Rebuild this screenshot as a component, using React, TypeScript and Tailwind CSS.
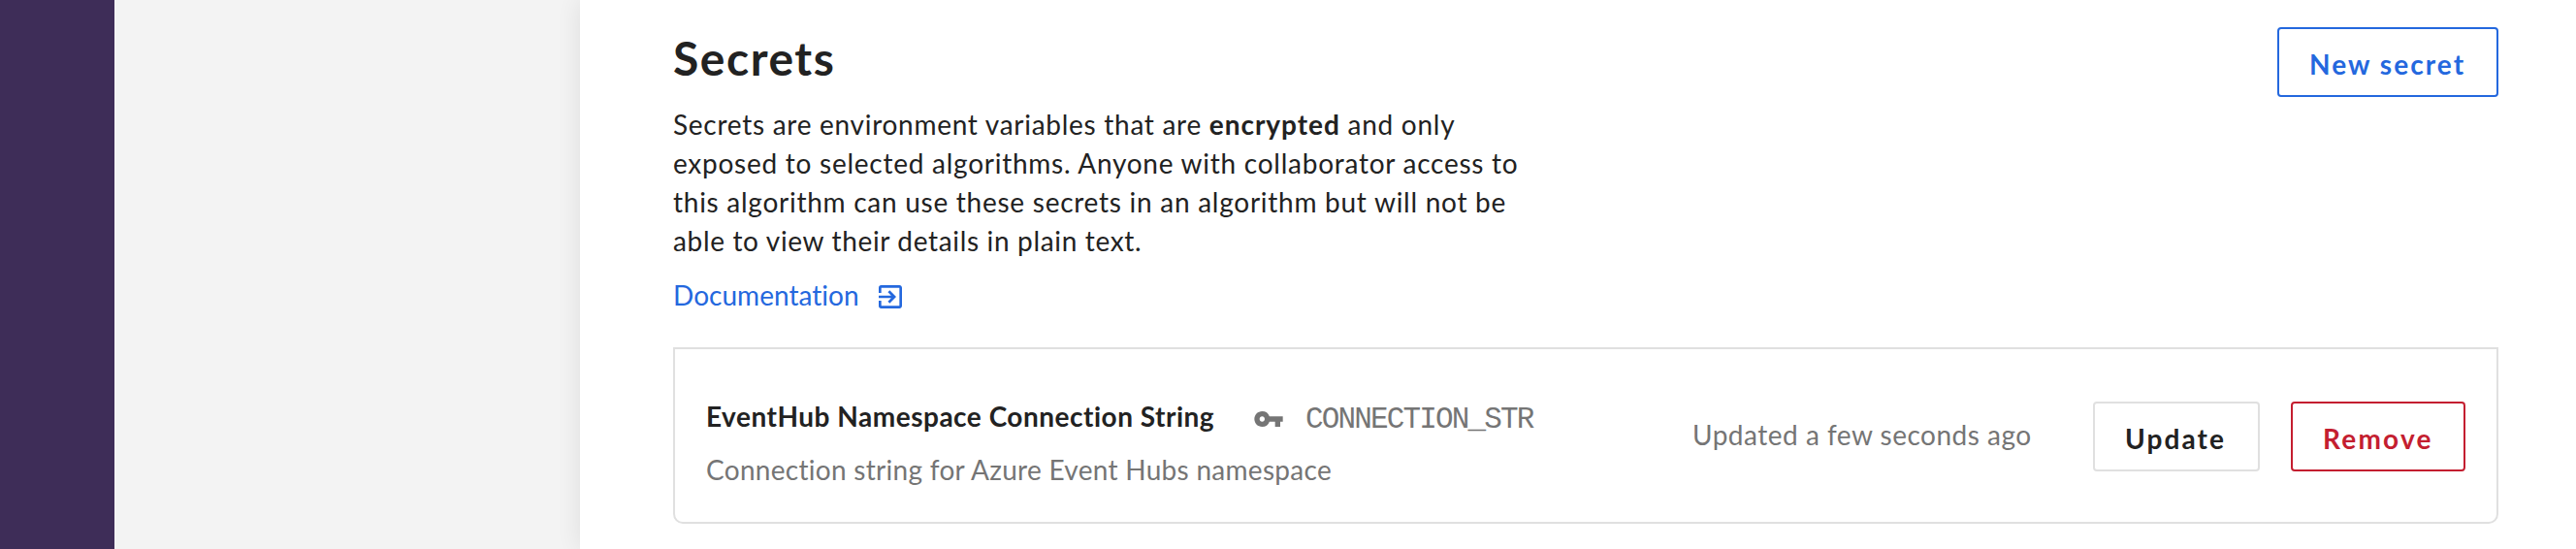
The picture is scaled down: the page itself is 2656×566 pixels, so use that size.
import type { ReactNode } from "react";
import { MdExitToApp, MdVpnKey } from "react-icons/md";

type ButtonProps = { children: ReactNode; className: string };

function OutlineButton({ children, className }: ButtonProps) {
  return (
    <button
      type="button"
      className={`flex h-[72px] shrink-0 items-center rounded border-2 bg-white pt-[4px] pl-[31px] text-[28px] leading-10 font-bold whitespace-nowrap ${className}`}
    >
      {children}
    </button>
  );
}

function SecretCard() {
  return (
    <article className="mt-[34px] flex h-[182px] items-start justify-between rounded-b-[10px] border-2 border-[#e0e0e0] pr-8 pl-[32px]">
      <div className="pt-[49px]">
        <div className="flex h-10 items-start whitespace-nowrap">
          <h2 className="w-[564px] text-[28px] leading-10 font-bold tracking-[0.51px]">
            EventHub Namespace Connection String
          </h2>
          <MdVpnKey className="mt-[7px] size-8 text-[#757575]" />
          <code className="mt-1 ml-[22px] font-['Liberation_Mono',monospace] text-[31px] leading-10 tracking-[-1.85px] text-[#757575]">
            CONNECTION_STR
          </code>
        </div>
        <p className="mt-[15px] text-[28px] leading-10 tracking-[0.29px] text-[#757575]">
          Connection string for Azure Event Hubs namespace
        </p>
      </div>
      <div className="flex items-start pt-[54px]">
        <p className="mt-[14px] w-[413px] text-[28px] leading-10 tracking-[0.5px] whitespace-nowrap text-[#757575]">
          Updated a few seconds ago
        </p>
        <OutlineButton className="w-[172px] border-[#e0e0e0] tracking-[2.1px]">Update</OutlineButton>
        <OutlineButton className="ml-8 w-[180px] border-[#c41e30] tracking-[2.2px] text-[#c41e30]">
          Remove
        </OutlineButton>
      </div>
    </article>
  );
}

export default function App() {
  return (
    <div className="flex h-[566px] w-full overflow-hidden bg-[#f3f3f3] font-['Lato',sans-serif] text-[#222222]">
      <nav className="w-[118px] shrink-0 bg-[#3e2d58]" />
      <aside className="w-[480px] shrink-0" />
      <main className="grow bg-white pr-20 pl-24 shadow-[0_0_24px_rgba(0,0,0,0.09)]">
        <header className="flex items-start justify-between">
          <div className="pt-[28px]">
            <h1 className="text-[48px] leading-[64px] font-bold tracking-[1.55px]">Secrets</h1>
            <p className="mt-4 text-[28px] leading-10 whitespace-nowrap">
              <span className="block tracking-[0.72px]">
                Secrets are environment variables that are{" "}
                <strong className="tracking-[0.95px]">encrypted</strong> and only
              </span>
              <span className="block tracking-[0.745px]">
                exposed to selected algorithms. Anyone with collaborator access to
              </span>
              <span className="block tracking-[0.735px]">
                this algorithm can use these secrets in an algorithm but will not be
              </span>
              <span className="block tracking-[0.66px]">able to view their details in plain text.</span>
            </p>
            <a href="#" className="mt-4 flex h-10 items-start text-[28px] leading-10 text-[#2468de]">
              <span className="w-[208px] tracking-[0.03px]">Documentation</span>
              <MdExitToApp className="mt-[6px] size-8" />
            </a>
          </div>
          <OutlineButton className="mt-7 w-[228px] border-[#2468de] tracking-[2.05px] text-[#2468de]">
            New secret
          </OutlineButton>
        </header>
        <SecretCard />
      </main>
    </div>
  );
}
